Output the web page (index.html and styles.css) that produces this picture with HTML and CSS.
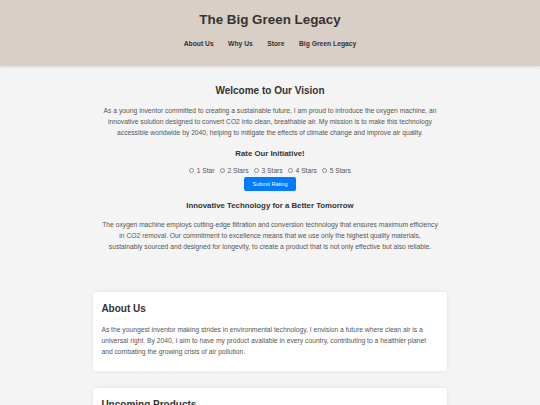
FILE: index.html
```html
<!DOCTYPE html>
<html lang="en">
<head>
<meta charset="utf-8">
<title>The Big Green Legacy</title>
<link rel="stylesheet" href="styles.css">
</head>
<body>
<header class="site-header">
  <h1 class="site-title">The Big Green Legacy</h1>
  <nav class="site-nav">
    <a href="#about">About Us</a>
    <a href="#why">Why Us</a>
    <a href="#store">Store</a>
    <a href="#legacy">Big Green Legacy</a>
  </nav>
</header>
<main class="container">
  <section class="hero">
    <h2 class="hero-title">Welcome to Our Vision</h2>
    <p class="text">As a young inventor committed to creating a sustainable future, I am proud to introduce the oxygen machine, an innovative solution designed to convert CO2 into clean, breathable air. My mission is to make this technology accessible worldwide by 2040, helping to mitigate the effects of climate change and improve air quality.</p>
    <h3 class="sub-title">Rate Our Initiative!</h3>
    <form class="rating">
      <div class="rating-options">
        <label><input type="radio" name="r"> 1 Star</label>
        <label><input type="radio" name="r"> 2 Stars</label>
        <label><input type="radio" name="r"> 3 Stars</label>
        <label><input type="radio" name="r"> 4 Stars</label>
        <label><input type="radio" name="r"> 5 Stars</label>
      </div>
      <button type="button" class="btn">Submit Rating</button>
    </form>
    <h3 class="sub-title tech">Innovative Technology for a Better Tomorrow</h3>
    <p class="text">The oxygen machine employs cutting-edge filtration and conversion technology that ensures maximum efficiency in CO2 removal. Our commitment to excellence means that we use only the highest quality materials, sustainably sourced and designed for longevity, to create a product that is not only effective but also reliable.</p>
  </section>
  <section class="card" id="about">
    <h2 class="card-title">About Us</h2>
    <p class="text left">As the youngest inventor making strides in environmental technology, I envision a future where clean air is a universal right. By 2040, I aim to have my product available in every country, contributing to a healthier planet and combating the growing crisis of air pollution.</p>
  </section>
  <section class="card" id="store">
    <h2 class="card-title">Upcoming Products</h2>
    <p class="text left">Stay tuned for our upcoming range of air purification products designed for homes, schools and offices.</p>
  </section>
</main>
</body>
</html>
```
FILE: styles.css
```css
* { box-sizing: border-box; }
html, body { margin: 0; padding: 0; }
body {
  background: #f4f4f4;
  font-family: "Liberation Sans", Arial, sans-serif;
  font-size: 6.7px;
  color: #333;
}
.site-header {
  background: #d9cfc6;
  padding: 11.5px 0 18px;
  text-align: center;
  box-shadow: 0 1px 3px rgba(0,0,0,0.12);
}
.site-title {
  margin: 0;
  font-size: 13.4px;
  line-height: 16px;
  color: #333;
}
.site-nav {
  margin-top: 12.2px;
  display: flex;
  justify-content: center;
  gap: 14.4px;
  line-height: 8px;
}
.site-nav a {
  color: #333;
  text-decoration: none;
  font-weight: bold;
  font-size: 6.75px;
}
.container {
  width: 354px;
  margin: 0 auto;
}
.hero {
  text-align: center;
  padding: 19.5px 8.6px 0;
}
.hero-title {
  margin: 0;
  font-size: 10px;
  line-height: 12px;
}
.text {
  margin: 8px 0 0;
  line-height: 11px;
  color: #555;
  font-size: 6.74px;
}
.text.left { text-align: left; }
.sub-title {
  margin: 10.6px 0 0;
  font-size: 7.8px;
  line-height: 9px;
}
.rating { margin-top: 8.7px; display: flex; flex-direction: column; align-items: center; }
.rating-options {
  display: flex;
  gap: 5.4px;
  line-height: 9px;
  color: #555;
}
.rating-options label { display: flex; align-items: center; gap: 2.5px; }
.rating-options input {
  appearance: none;
  -webkit-appearance: none;
  margin: 0;
  width: 5px;
  height: 5px;
  border: 0.6px solid #8a8a8a;
  border-radius: 50%;
  background: #fff;
}
.btn {
  margin-top: 1.2px;
  width: 52px;
  height: 14.4px;
  border: 0;
  border-radius: 2px;
  background: #007bff;
  color: #fff;
  font-family: inherit;
  font-size: 5.6px;
  padding: 0;
}
.sub-title.tech { margin-top: 10.2px; }
.tech + .text { margin-top: 8.6px; }
.card {
  background: #fff;
  margin-top: 40px;
  padding: 11px 8.4px 14.5px;
  border-radius: 3px;
  box-shadow: 0 0 4px rgba(0,0,0,0.08);
}
.card + .card { margin-top: 17px; }
.card-title {
  margin: 0;
  font-size: 10px;
  line-height: 12px;
}
.card .text { margin-top: 9px; }
```
